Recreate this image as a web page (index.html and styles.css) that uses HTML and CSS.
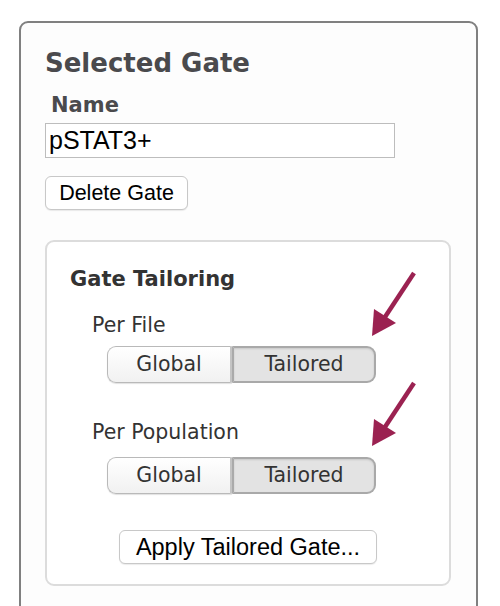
FILE: index.html
```html
<!DOCTYPE html>
<html>
<head>
<meta charset="utf-8">
<link rel="stylesheet" href="styles.css">
</head>
<body>
<div class="panel">
  <h1 class="title">Selected Gate</h1>
  <div class="label">Name</div>
  <div class="input">pSTAT3+</div>
  <div class="btn delete">Delete Gate</div>
  <div class="tailoring">
    <h2 class="sub">Gate Tailoring</h2>
    <div class="row-label">Per File</div>
    <div class="seg">
      <div class="seg-item global">Global</div>
      <div class="seg-item tailored">Tailored</div>
    </div>
    <div class="row-label second">Per Population</div>
    <div class="seg seg2">
      <div class="seg-item global">Global</div>
      <div class="seg-item tailored">Tailored</div>
    </div>
    <div class="apply-wrap"><div class="btn apply">Apply Tailored Gate...</div></div>
    <svg class="arrow a1" width="55" height="72" viewBox="0 0 55 72"><line x1="49" y1="5" x2="20" y2="49" stroke="#9b2251" stroke-width="4.5" stroke-linecap="butt"/><polygon points="7,68 9,41 31,55" fill="#9b2251"/></svg>
    <svg class="arrow a2" width="55" height="72" viewBox="0 0 55 72"><line x1="49" y1="5" x2="20" y2="49" stroke="#9b2251" stroke-width="4.5" stroke-linecap="butt"/><polygon points="7,68 9,41 31,55" fill="#9b2251"/></svg>
  </div>
</div>
</body>
</html>
```
FILE: styles.css
```css
html, body { margin: 0; padding: 0; background: #ffffff; }
body { font-family: "DejaVu Sans", Verdana, sans-serif; height: 606px; overflow: hidden; }
.panel {
  margin: 21px 0 0 19px;
  width: 459px;
  height: 640px;
  border: 2px solid #808080;
  border-radius: 9px;
  background: #fdfdfd;
  padding: 24px 0 0 24px;
  box-sizing: border-box;
}
.title {
  margin: 0;
  font-size: 26px;
  line-height: 32px;
  font-weight: bold;
  color: #4a4a4d;
}
.label {
  margin: 14px 0 0 6px;
  font-size: 21px;
  line-height: 24px;
  font-weight: bold;
  color: #4a4a4d;
}
.input {
  margin-top: 6px;
  width: 350px;
  height: 35px;
  box-sizing: border-box;
  border: 1px solid #bdbdbd;
  background: #fff;
  font-family: "Liberation Sans", Arial, sans-serif;
  font-size: 25px;
  line-height: 33px;
  padding-left: 3px;
  color: #000;
}
.btn {
  box-sizing: border-box;
  border: 1px solid #c8c8c8;
  border-radius: 6px;
  background: #fff;
  box-shadow: 0 1px 1px rgba(0,0,0,0.08);
  font-family: "Liberation Sans", Arial, sans-serif;
  color: #000;
  text-align: center;
}
.delete {
  margin-top: 18px;
  width: 143px;
  height: 34px;
  font-size: 21.5px;
  line-height: 32px;
}
.tailoring {
  position: relative;
  margin-top: 30px;
  width: 406px;
  height: 346px;
  box-sizing: border-box;
  border: 2px solid #dcdcdc;
  border-radius: 9px;
  background: #fff;
  padding: 24px 0 0 23px;
}
.sub {
  margin: 0;
  font-size: 21px;
  line-height: 26px;
  font-weight: bold;
  color: #333;
}
.row-label {
  margin: 21px 0 0 22px;
  font-size: 20.5px;
  line-height: 24px;
  color: #333;
}
.row-label.second { margin-top: 37px; }
.seg {
  display: flex;
  margin: 9px 0 0 37px;
  height: 37px;
}
.seg.seg2 { margin-top: 13px; }
.seg-item {
  box-sizing: border-box;
  height: 37px;
  font-size: 20.5px;
  line-height: 34px;
  text-align: center;
  color: #333;
}
.global {
  width: 125px;
  border: 1px solid #b9b9b9;
  border-right: 2px solid #c4c4c4;
  border-radius: 9px 0 0 9px;
  background: linear-gradient(#ffffff, #f1f1f1);
  box-shadow: 0 1px 1px rgba(0,0,0,0.12);
}
.tailored {
  width: 144px;
  border: 2px solid #a9a9a9;
  border-left: 2px solid #aaaaaa;
  border-radius: 0 9px 9px 0;
  background: #e3e3e3;
  box-shadow: inset 0 1px 2px rgba(0,0,0,0.12);
  line-height: 33px;
}
.apply-wrap {
  display: flex;
  justify-content: center;
  margin: 36px 0 0 -23px;
}
.apply {
  width: 258px;
  height: 34px;
  font-size: 23.5px;
  line-height: 32px;
}
.arrow { position: absolute; left: 318px; }
.a1 { top: 26px; }
.a2 { top: 136px; }
```
